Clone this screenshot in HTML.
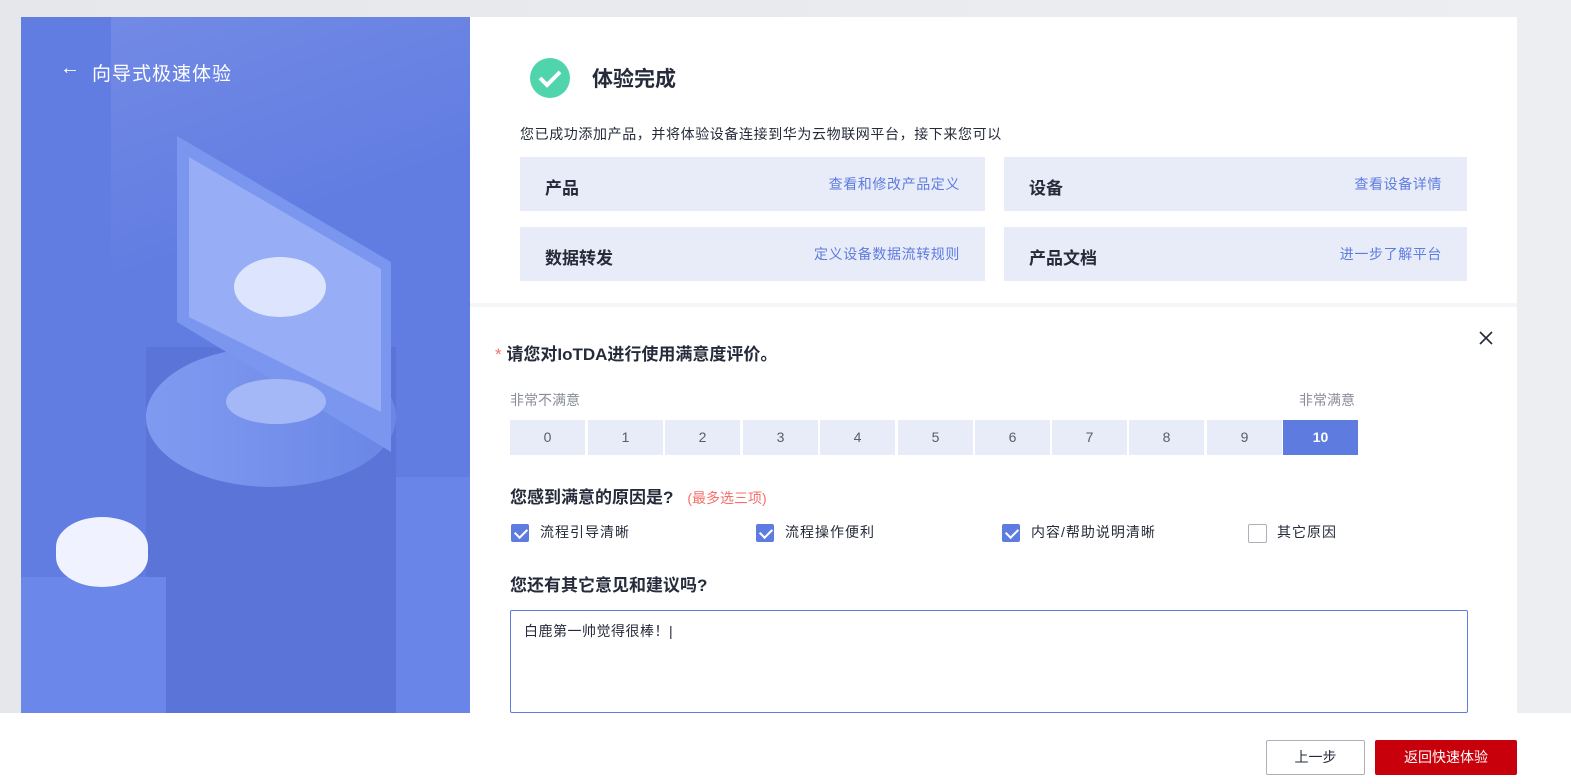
<!DOCTYPE html>
<html><head><meta charset="utf-8"><style>
*{margin:0;padding:0;box-sizing:border-box}
body{width:1571px;height:784px;overflow:hidden;background:linear-gradient(90deg,#e6e7eb,#eceef2);font-family:"Liberation Sans","Noto Sans CJK SC",sans-serif;position:relative;color:#252b3a}
.a{position:absolute}
.left{left:21px;top:17px;width:449px;height:696px;background:#627de2;overflow:hidden}
.right{left:470px;top:17px;width:1047px;height:696px;background:#fff}
.card{background:#e8ecf8;height:54px;width:465px}
.card b{position:absolute;left:25px;top:17px;font-size:17px;font-weight:bold;color:#252b3a}
.card span{position:absolute;right:25px;top:17px;font-size:14px;letter-spacing:.6px;color:#5e7ce0}
.r{top:403px;width:75px;height:35px;background:#e8ecf8;font-size:14px;color:#575d6c;text-align:center;line-height:35px}
.cb{width:18px;height:18px;background:#5e7ce0;border-radius:2px}
.cb:after{content:"";position:absolute;left:4px;top:4px;width:10px;height:6px;border:solid #fff;border-width:0 0 2px 2px;transform:rotate(-45deg)}
.lb{font-size:14px;letter-spacing:1px;color:#252b3a}
</style></head><body>
<div class="a left">
  <div class="a" style="left:90px;top:0;width:400px;height:300px;background:linear-gradient(160deg,rgba(255,255,255,.1),rgba(255,255,255,0) 60%)"></div>
  <div class="a" style="left:39px;top:40px;color:#fff;font-size:20px">←</div>
  <div class="a" style="left:71px;top:42px;color:#fff;font-size:19px;letter-spacing:1px">向导式极速体验</div>
  <div class="a" style="left:125px;top:330px;width:250px;height:366px;background:#5a74d8"></div>
  <div class="a" style="left:125px;top:330px;width:250px;height:140px;border-radius:50%;background:linear-gradient(90deg,#7f9bf0,#6a86e6)"></div>
  <svg class="a" style="left:150px;top:115px" width="230" height="320"><polygon points="6,4 220,130 220,320 6,190" fill="#7b96ee"/><polygon points="18,25 210,137 210,280 18,185" fill="#97aef6"/></svg>
  <div class="a" style="left:205px;top:362px;width:100px;height:45px;border-radius:50%;background:#a4b7f6"></div>
  <div class="a" style="left:213px;top:240px;width:92px;height:60px;border-radius:46px/30px;background:#dde4fd"></div>
  <div class="a" style="left:0;top:560px;width:145px;height:136px;background:#6b87ea"></div>
  <div class="a" style="left:35px;top:500px;width:92px;height:70px;border-radius:46px/30px;background:#f0f3ff"></div>
  <div class="a" style="left:375px;top:460px;width:74px;height:236px;background:#6985e8"></div>
</div>
<div class="a right">
  <svg class="a" style="left:59px;top:40px" width="42" height="42"><circle cx="21" cy="21" r="20" fill="#50d4ab"/><path d="M11 21l7 7 13-13" stroke="#fff" stroke-width="4" fill="none"/></svg>
  <div class="a" style="left:122px;top:46px;font-size:21px;font-weight:bold">体验完成</div>
  <div class="a" style="left:50px;top:107px;font-size:14px;letter-spacing:.6px">您已成功添加产品，并将体验设备连接到华为云物联网平台，接下来您可以</div>
  <div class="a card" style="left:50px;top:140px"><b>产品</b><span>查看和修改产品定义</span></div>
  <div class="a card" style="left:534px;top:140px;width:463px"><b>设备</b><span>查看设备详情</span></div>
  <div class="a card" style="left:50px;top:210px"><b>数据转发</b><span>定义设备数据流转规则</span></div>
  <div class="a card" style="left:534px;top:210px;width:463px"><b>产品文档</b><span>进一步了解平台</span></div>
  <div class="a" style="left:0;top:286px;width:1047px;height:4px;background:#f5f6f8"></div>
  <svg class="a" style="left:1009px;top:314px" width="14" height="14"><path d="M1 1L13 13M13 1L1 13" stroke="#252b3a" stroke-width="1.6"/></svg>
  <div class="a" style="left:25px;top:323px;font-size:17px;font-weight:bold"><span style="color:#f66f6a;font-weight:normal">* </span>请您对IoTDA进行使用满意度评价。</div>
  <div class="a" style="left:40px;top:373px;font-size:14px;color:#8a8e99">非常不满意</div>
  <div class="a" style="left:829px;top:373px;font-size:14px;color:#8a8e99">非常满意</div>
  <div class="a r" style="left:40px">0</div><div class="a r" style="left:118px">1</div><div class="a r" style="left:195px">2</div><div class="a r" style="left:273px">3</div><div class="a r" style="left:350px">4</div><div class="a r" style="left:428px">5</div><div class="a r" style="left:505px">6</div><div class="a r" style="left:582px">7</div><div class="a r" style="left:659px">8</div><div class="a r" style="left:737px">9</div><div class="a r" style="left:813px;background:#5e7ce0;color:#fff;font-weight:bold">10</div>
  <div class="a" style="left:40px;top:466px;font-size:17px;font-weight:bold">您感到满意的原因是?<span style="color:#f66f6a;font-weight:normal;font-size:14px;margin-left:14px">(最多选三项)</span></div>
  <div class="a cb" style="left:41px;top:507px"></div><div class="a lb" style="left:70px;top:505px">流程引导清晰</div>
  <div class="a cb" style="left:286px;top:507px"></div><div class="a lb" style="left:315px;top:505px">流程操作便利</div>
  <div class="a cb" style="left:532px;top:507px"></div><div class="a lb" style="left:561px;top:505px">内容/帮助说明清晰</div>
  <div class="a" style="left:778px;top:507px;width:19px;height:19px;border:1px solid #adb0b8;border-radius:2px"></div><div class="a lb" style="left:807px;top:505px">其它原因</div>
  <div class="a" style="left:40px;top:554px;font-size:17px;font-weight:bold">您还有其它意见和建议吗?</div>
  <div class="a" style="left:40px;top:593px;width:958px;height:103px;border:1px solid #5e7ce0;border-radius:2px;padding:10px 13px;font-size:14px;letter-spacing:.5px">白鹿第一帅觉得很棒！|</div>
</div>
<div class="a" style="left:0;top:713px;width:1571px;height:71px;background:#fff"></div>
<div class="a" style="left:1266px;top:740px;width:99px;height:35px;border:1px solid #adb0b8;border-radius:2px;text-align:center;line-height:33px;font-size:14px">上一步</div>
<div class="a" style="left:1375px;top:740px;width:142px;height:35px;background:#c7000b;border-radius:2px;color:#fff;text-align:center;line-height:35px;font-size:14px">返回快速体验</div>
</body></html>
